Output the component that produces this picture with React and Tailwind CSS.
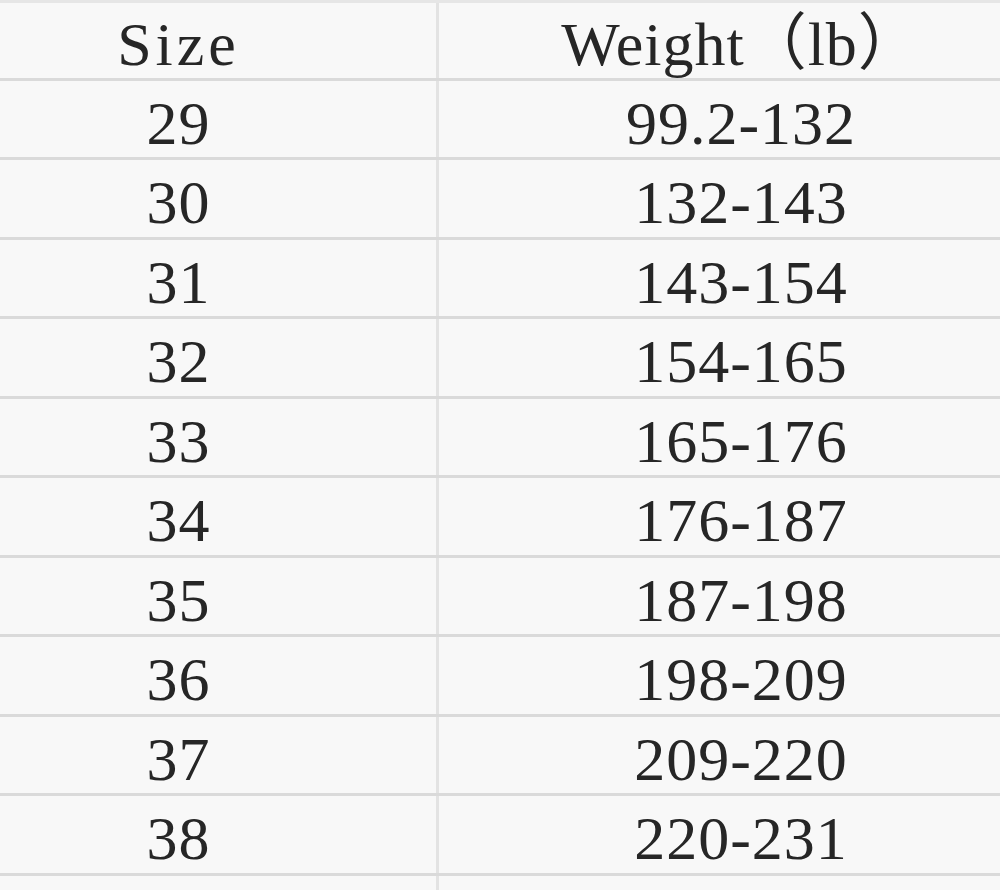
const rows = [
  ["29", "99.2-132"],
  ["30", "132-143"],
  ["31", "143-154"],
  ["32", "154-165"],
  ["33", "165-176"],
  ["34", "176-187"],
  ["35", "187-198"],
  ["36", "198-209"],
  ["37", "209-220"],
  ["38", "220-231"],
];

function Row({ size, weight, header }) {
  return (
    <div
      className={`flex border-b-[3px] border-[#dadada] ${header ? "h-[77.5px]" : "h-[79.5px]"}`}
    >
      <div className="flex w-[439px] items-center justify-center border-r-[3px] border-[#e3e3e3] pr-[79px] pt-[8px]">
        <span className={header ? "tracking-[4px]" : "tracking-[1px]"}>{size}</span>
      </div>
      <div className="flex flex-1 items-center justify-center pl-[43px] pt-[8px]">
        <span className="tracking-[1px]">{weight}</span>
      </div>
    </div>
  );
}

export default function App() {
  return (
    <div
      className="flex h-[894px] w-[1000px] flex-col overflow-hidden bg-white text-[62px] leading-none text-[#262626]"
      style={{ fontFamily: '"Liberation Serif", "Noto Sans CJK SC", serif' }}
    >
      <div className="h-[3px] bg-[#e6e6e6]" />
      <div className="bg-[#f8f8f8]">
        <Row header size="Size" weight="Weight（lb）" />
        {rows.map(([s, w]) => (
          <Row key={s} size={s} weight={w} />
        ))}
        <div className="flex h-[14px]">
          <div className="w-[439px] border-r-[3px] border-[#e3e3e3]" />
        </div>
      </div>
    </div>
  );
}
